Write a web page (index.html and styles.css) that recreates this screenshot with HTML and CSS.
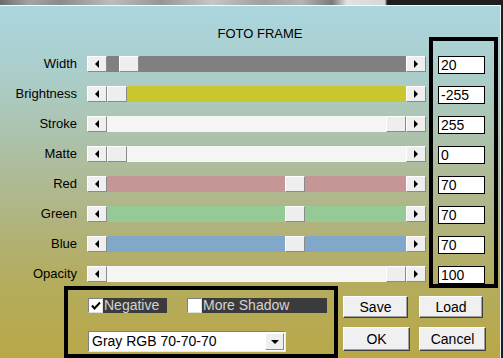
FILE: index.html
```html
<!DOCTYPE html>
<html lang="en">
<head>
  <meta charset="UTF-8" />
  <title>Foto Frame</title>
  <link rel="stylesheet" href="styles.css">
</head>
<body>
  <div class="strip"></div>
  <div class="dialog">
    <div class="upper">
      <div class="sliders">
        <div class="title">FOTO FRAME</div>
        <div class="rows">
          <div class="row">
            <span class="label">Width</span>
            <div class="scroll"><span class="arrow left"></span><div class="track gray"><span class="thumb" style="margin-left:12px"></span></div><span class="arrow right"></span></div>
          </div>
          <div class="row">
            <span class="label">Brightness</span>
            <div class="scroll"><span class="arrow left"></span><div class="track yellow"><span class="thumb" style="margin-left:0px"></span></div><span class="arrow right"></span></div>
          </div>
          <div class="row">
            <span class="label">Stroke</span>
            <div class="scroll"><span class="arrow left"></span><div class="track white"><span class="thumb" style="margin-left:279px"></span></div><span class="arrow right"></span></div>
          </div>
          <div class="row">
            <span class="label">Matte</span>
            <div class="scroll"><span class="arrow left"></span><div class="track white"><span class="thumb" style="margin-left:0px"></span></div><span class="arrow right"></span></div>
          </div>
          <div class="row">
            <span class="label">Red</span>
            <div class="scroll"><span class="arrow left"></span><div class="track red"><span class="thumb" style="margin-left:178px"></span></div><span class="arrow right"></span></div>
          </div>
          <div class="row">
            <span class="label">Green</span>
            <div class="scroll"><span class="arrow left"></span><div class="track green"><span class="thumb" style="margin-left:178px"></span></div><span class="arrow right"></span></div>
          </div>
          <div class="row">
            <span class="label">Blue</span>
            <div class="scroll"><span class="arrow left"></span><div class="track blue"><span class="thumb" style="margin-left:178px"></span></div><span class="arrow right"></span></div>
          </div>
          <div class="row">
            <span class="label">Opacity</span>
            <div class="scroll"><span class="arrow left"></span><div class="track white"><span class="thumb" style="margin-left:279px"></span></div><span class="arrow right"></span></div>
          </div>
        </div>
      </div>
      <div class="values">
        <div class="value">20</div>
        <div class="value">-255</div>
        <div class="value">255</div>
        <div class="value">0</div>
        <div class="value">70</div>
        <div class="value">70</div>
        <div class="value">70</div>
        <div class="value">100</div>
      </div>
    </div>
    <div class="lower">
      <div class="options">
        <div class="checks">
          <div class="check">
            <span class="box">
              <svg width="12" height="12" viewBox="0 0 12 12"><polyline points="2,5.5 4.5,8.5 10,2.5" fill="none" stroke="#000" stroke-width="2"/></svg>
            </span>
            <span class="caption neg">Negative</span>
          </div>
          <div class="check">
            <span class="box"></span>
            <span class="caption shadow">More Shadow</span>
          </div>
        </div>
        <div class="select">
          <span class="select-text">Gray RGB 70-70-70</span>
          <span class="select-btn"></span>
        </div>
      </div>
      <div class="buttons">
        <button class="btn save">Save</button>
        <button class="btn load">Load</button>
        <button class="btn ok">OK</button>
        <button class="btn cancel">Cancel</button>
      </div>
    </div>
  </div>
</body>
</html>
```

FILE: styles.css
```css
* {
  box-sizing: border-box;
}

body {
  margin: 0;
  width: 503px;
  height: 358px;
  overflow: hidden;
  background: #1e1e1e;
  font-family: "Liberation Sans", Arial, sans-serif;
  font-size: 13px;
  color: #000;
}

.strip {
  height: 5px;
  width: 503px;
  background: linear-gradient(90deg, #6c6c6c 0%, #a4a4a4 6%, #8a8a8a 12%, #bcbcbc 22%, #969696 32%, #c6c6c6 42%, #a0a0a0 52%, #b4b4b4 60%, #7a7a7a 66%, #e2e2e2 69%, #d6d6d6 76.5%, #1e1e1e 77%);
}

.dialog {
  width: 501px;
  height: 353px;
  border-top: 1px solid #f4f8f8;
  border-right: 1px solid #e8eef0;
  background: linear-gradient(180deg, #aad6e0 0%, #abcdc9 20%, #adc0a6 40%, #b0b585 58%, #b4ac5e 78%, #b8a848 100%);
  display: flex;
  flex-direction: column;
}

.upper {
  display: flex;
}

.sliders {
  width: 429px;
  padding-top: 20px;
}

.title {
  height: 16px;
  line-height: 16px;
  text-align: center;
  padding-left: 91px;
}

.rows {
  margin-top: 14px;
  display: flex;
  flex-direction: column;
  gap: 14px;
}

.row {
  display: flex;
  align-items: center;
  height: 16px;
}

.label {
  width: 77px;
  margin-right: 10px;
  text-align: right;
  line-height: 16px;
}

.scroll {
  display: flex;
  width: 339px;
  height: 16px;
}

.arrow {
  width: 20px;
  height: 16px;
  background: #efefef;
  border-top: 1px solid #fff;
  border-left: 1px solid #fff;
  border-right: 1px solid #8a8a8a;
  border-bottom: 1px solid #8a8a8a;
  display: flex;
  align-items: center;
  justify-content: center;
}

.arrow::before {
  content: "";
  width: 0;
  height: 0;
  border-top: 4px solid transparent;
  border-bottom: 4px solid transparent;
}

.arrow.left::before {
  border-right: 4px solid #000;
}

.arrow.right::before {
  border-left: 4px solid #000;
}

.track {
  flex: 1;
  height: 16px;
  display: flex;
}

.track.gray { background: #808080; }
.track.yellow { background: #c9c630; }
.track.white { background: #f5f5f3; }
.track.red { background: #c69596; }
.track.green { background: #95c995; }
.track.blue { background: #82a8c9; }

.thumb {
  width: 20px;
  height: 16px;
  background: #eeeeee;
  border-top: 1px solid #fff;
  border-left: 1px solid #fff;
  border-right: 1px solid #8a8a8a;
  border-bottom: 1px solid #8a8a8a;
}

.values {
  margin-top: 31px;
  width: 69px;
  height: 251px;
  border: 4px solid #000;
  padding: 15px 0 0 5px;
  display: flex;
  flex-direction: column;
  gap: 12px;
}

.value {
  width: 47px;
  height: 18px;
  background: #fff;
  border: 1px solid #000;
  padding-left: 2px;
  line-height: 16px;
  font-size: 14px;
}

.lower {
  display: flex;
  margin-top: -2px;
  padding-left: 64px;
}

.options {
  width: 274px;
  height: 72px;
  border: 4px solid #000;
  padding: 8px 0 0 20px;
}

.checks {
  display: flex;
  gap: 20px;
  height: 15px;
}

.check {
  display: flex;
}

.box {
  width: 15px;
  height: 15px;
  background: #fff;
  border-top: 1px solid #808080;
  border-left: 1px solid #808080;
  border-right: 1px solid #e0e0e0;
  border-bottom: 1px solid #e0e0e0;
  display: flex;
  align-items: center;
  justify-content: center;
}

.caption {
  height: 15px;
  line-height: 15px;
  background: #3b3b3b;
  color: #d4d4d4;
  font-size: 14px;
  padding-left: 1px;
}

.caption.neg { width: 64px; }
.caption.shadow { width: 125px; }

.select {
  margin-top: 18px;
  width: 198px;
  height: 21px;
  background: #fff;
  border-top: 1px solid #808080;
  border-left: 1px solid #808080;
  border-right: 1px solid #e8e8e8;
  border-bottom: 1px solid #e8e8e8;
  display: flex;
  align-items: center;
  justify-content: space-between;
  padding: 0 1px 0 3px;
}

.select-text {
  font-size: 14px;
  line-height: 19px;
}

.select-btn {
  width: 19px;
  height: 17px;
  background: #efefef;
  border-top: 1px solid #fff;
  border-left: 1px solid #fff;
  border-right: 1px solid #8a8a8a;
  border-bottom: 1px solid #8a8a8a;
  display: flex;
  align-items: center;
  justify-content: center;
}

.select-btn::before {
  content: "";
  width: 0;
  height: 0;
  border-left: 4px solid transparent;
  border-right: 4px solid transparent;
  border-top: 4px solid #000;
}

.buttons {
  display: grid;
  grid-template-columns: 67px 67px;
  column-gap: 9px;
  row-gap: 9px;
  padding-top: 10px;
  margin-left: 5px;
  align-content: start;
}

.btn {
  font-family: "Liberation Sans", Arial, sans-serif;
  font-size: 14px;
  color: #000;
  background: #f0f0f0;
  border-top: 1px solid #fff;
  border-left: 1px solid #fff;
  border-right: 1px solid #404040;
  border-bottom: 1px solid #404040;
  box-shadow: inset -1px -1px 0 #a0a0a0;
  padding: 0;
  height: 22px;
}

.btn.save { width: 65px; }
.btn.load { width: 64px; }
.btn.ok,
.btn.cancel {
  width: 67px;
  height: 24px;
}
```
